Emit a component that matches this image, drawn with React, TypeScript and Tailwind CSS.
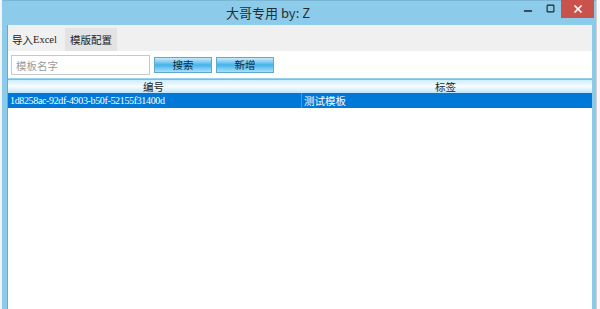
import { Minus, Square, X } from "lucide-react";

const cjk = "font-['Microsoft_YaHei','Noto_Sans_CJK_SC',sans-serif]";
const simsun = "font-['Liberation_Serif','Noto_Sans_CJK_SC',serif]";

function BlueButton({ label }: { label: string }) {
    return (
        <button
            type="button"
            className={`h-[16px] w-[58px] border border-[#5fa9cf] bg-gradient-to-b from-[#c8ecfb] via-[#3fb3ea] to-[#a9e0f7] text-[10.5px] leading-[14px] text-[#0b2a4a] ${cjk}`}
        >
            {label}
        </button>
    );
}

export default function App() {
    return (
        <div className="flex h-[309px] w-[600px] overflow-hidden bg-[#fafafa]">
            <div className="w-[2px] shrink-0 bg-[#f4f4f4]" />
            <div className="flex w-[594px] shrink-0 flex-col border-t border-[#7ab6d4] bg-[#8ccbea]">
                {/* title bar */}
                <div className="relative flex h-[24px] shrink-0 items-center justify-center pr-[62px]">
                    <span className={`text-[13px] text-[#2b2b2b] ${cjk}`}>大哥专用 by: Z</span>
                    <div className="absolute right-[2px] top-[-1px] flex items-start">
                        <div className="flex h-[18px] w-[22px] items-center justify-center">
                            <Minus className="mt-[3px] h-3 w-3 text-[#222]" strokeWidth={3} />
                        </div>
                        <div className="flex h-[18px] w-[22px] items-center justify-center">
                            <Square className="mb-[2px] h-[9px] w-[9px] text-[#222]" strokeWidth={3} />
                        </div>
                        <div className="flex h-[18px] w-[33px] items-center justify-center bg-[#c9524c]">
                            <X className="h-3 w-3 text-white" strokeWidth={3.5} />
                        </div>
                    </div>
                </div>

                {/* client area */}
                <div className="ml-[5px] mr-[4px] flex flex-1 flex-col border-l border-[#6fa9c8] bg-white">
                    {/* tabs */}
                    <div className="flex h-[26px] shrink-0 items-end gap-[6px] bg-[#f0f0f0] pl-[2px]">
                        <div className={`flex h-[23px] items-center px-[2px] text-[10.5px] text-[#222] ${simsun}`}>
                            <span className={cjk}>导入</span>Excel
                        </div>
                        <div className={`flex h-[23px] w-[52px] items-center justify-center bg-[#e3e3e3] text-[10.5px] text-[#222] ${cjk}`}>
                            模版配置
                        </div>
                    </div>

                    {/* toolbar */}
                    <div className="flex h-[27px] shrink-0 items-center gap-[4px] pl-[3px] pt-[1px]">
                        <input
                            readOnly
                            placeholder="模板名字"
                            className={`h-[20px] w-[139px] border border-[#c9c9c9] px-[4px] text-[10.5px] placeholder:text-[#9a9a9a] ${cjk}`}
                        />
                        <BlueButton label="搜索" />
                        <BlueButton label="新增" />
                    </div>

                    {/* grid */}
                    <div className="flex shrink-0 flex-col">
                        <div className="h-[2px] bg-gradient-to-b from-[#a9dcf4] to-[#5fb4e2]" />
                        <div className={`grid h-[13px] grid-cols-[291px_1fr] bg-gradient-to-b from-[#cdeefc] via-[#f6fcff] to-[#bfe6f8] text-[10.5px] leading-[13px] text-[#222] ${cjk}`}>
                            <div className="text-center">编号</div>
                            <div className="text-center">标签</div>
                        </div>
                        <div className="grid h-[15px] grid-cols-[293px_1fr] bg-[#0078d7] text-white">
                            <div className={`pl-[2px] text-[10px] leading-[15px] tracking-[-0.35px] ${simsun}`}>
                                1d8258ac-92df-4903-b50f-52155f31400d
                            </div>
                            <div className={`border-l border-[#3d9be4] pl-[2px] text-[10.5px] leading-[15px] ${cjk}`}>
                                测试模板
                            </div>
                        </div>
                    </div>
                    <div className="flex-1 bg-white" />
                </div>
            </div>
            <div className="w-[4px] shrink-0 border-l border-[#d0d0d0] bg-[#f8f8f8]" />
        </div>
    );
}
